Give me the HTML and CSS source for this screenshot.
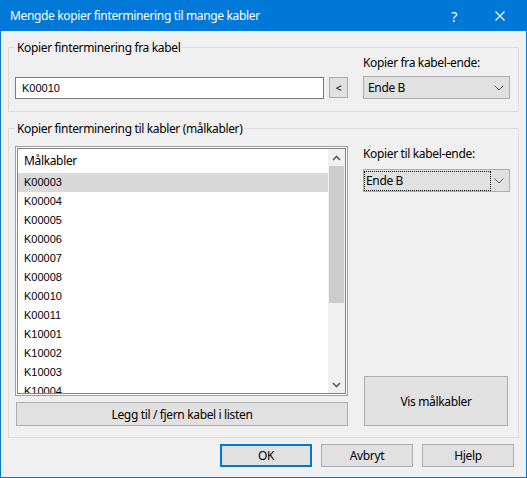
FILE: index.html
```html
<!DOCTYPE html>
<html>
<head>
<meta charset="utf-8">
<title>Mengde kopier finterminering til mange kabler</title>
<link rel="stylesheet" href="styles.css">
</head>
<body>
<div class="window">
  <div class="titlebar">
    <span class="title">Mengde kopier finterminering til mange kabler</span>
    <span class="tb-btn tb-help">?</span>
    <span class="tb-btn tb-close"><svg width="10" height="10" viewBox="0 0 10 10"><path d="M0.5 0.5L9.5 9.5M9.5 0.5L0.5 9.5" stroke="#fff" stroke-width="1.1" fill="none"/></svg></span>
  </div>
  <div class="content">
    <fieldset class="group group-from">
      <legend>Kopier finterminering fra kabel</legend>
      <div class="from-row">
        <div class="from-left">
          <div class="textbox">K00010</div>
          <div class="btn btn-pick">&lt;</div>
        </div>
        <div class="side">
          <div class="side-label">Kopier fra kabel-ende:</div>
          <div class="combo"><span class="combo-text">Ende B</span><svg class="chev" width="10" height="6" viewBox="0 0 10 6"><path d="M0.5 0.5L5 5L9.5 0.5" stroke="#606060" stroke-width="1" fill="none"/></svg></div>
        </div>
      </div>
    </fieldset>

    <fieldset class="group group-to">
      <legend>Kopier finterminering til kabler (målkabler)</legend>
      <div class="to-row">
        <div class="list-col">
          <div class="listbox">
            <div class="lb-inner">
              <div class="lb-rows">
                <div class="lb-head">Målkabler</div>
                <div class="lb-item sel">K00003</div>
                <div class="lb-item">K00004</div>
                <div class="lb-item">K00005</div>
                <div class="lb-item">K00006</div>
                <div class="lb-item">K00007</div>
                <div class="lb-item">K00008</div>
                <div class="lb-item">K00010</div>
                <div class="lb-item">K00011</div>
                <div class="lb-item">K10001</div>
                <div class="lb-item">K10002</div>
                <div class="lb-item">K10003</div>
                <div class="lb-item">K10004</div>
              </div>
              <div class="scrollbar">
                <div class="sb-btn"><svg width="9" height="6" viewBox="0 0 9 6"><path d="M1 5L4.5 1.5L8 5" stroke="#606060" stroke-width="1.6" fill="none"/></svg></div>
                <div class="sb-thumb"></div>
                <div class="sb-track"></div>
                <div class="sb-btn"><svg width="9" height="6" viewBox="0 0 9 6"><path d="M1 1L4.5 4.5L8 1" stroke="#606060" stroke-width="1.6" fill="none"/></svg></div>
              </div>
            </div>
          </div>
          <div class="btn btn-wide">Legg til / fjern kabel i listen</div>
        </div>
        <div class="side side-to">
          <div class="side-label side-label-to">Kopier til kabel-ende:</div>
          <div class="combo combo-focus"><span class="combo-text">Ende B</span><svg class="chev" width="10" height="6" viewBox="0 0 10 6"><path d="M0.5 0.5L5 5L9.5 0.5" stroke="#606060" stroke-width="1" fill="none"/></svg></div>
          <div class="btn btn-show">Vis målkabler</div>
        </div>
      </div>
    </fieldset>

    <div class="footer">
      <div class="btn btn-dialog btn-default">OK</div>
      <div class="btn btn-dialog">Avbryt</div>
      <div class="btn btn-dialog">Hjelp</div>
    </div>
  </div>
</div>
</body>
</html>
```
FILE: styles.css
```css
html, body {
  margin: 0;
  padding: 0;
  background: #f0f0f0;
}

body {
  font-family: "Noto Sans", "Open Sans", sans-serif;
  font-size: 12px;
  letter-spacing: -0.35px;
  color: #000;
}

.window {
  width: 527px;
  height: 478px;
  box-sizing: border-box;
  border: 1px solid #0078d7;
  border-top: 0;
  background: #f0f0f0;
  display: flex;
  flex-direction: column;
}

.titlebar {
  height: 31px;
  background: #0078d7;
  color: #fff;
  display: flex;
  align-items: center;
  padding: 0 3px 0 9px;
  flex: none;
}

.title {
  flex: 1;
  font-size: 12px;
  line-height: 16px;
  padding-top: 1px;
}

.tb-btn {
  width: 46px;
  height: 31px;
  display: flex;
  align-items: center;
  justify-content: center;
}

.tb-help {
  font-size: 14px;
  padding-top: 1px;
}

.content {
  flex: 1;
  padding: 8px 7px 0 7px;
  display: flex;
  flex-direction: column;
}

.group {
  margin: 0;
  border: 1px solid #dcdcdc;
  min-width: 0;
}

.group legend {
  padding: 0 2px;
  line-height: 16px;
  font-size: 12px;
  position: relative;
  top: 1px;
}

.group-from {
  padding: 0 8px 12px 6px;
}

.from-row {
  display: flex;
  gap: 15px;
}

.from-left {
  flex: 1;
  display: flex;
  gap: 5px;
  align-items: flex-start;
  align-self: flex-end;
}

.textbox {
  flex: 1;
  height: 22px;
  box-sizing: border-box;
  border: 1px solid #7a7a7a;
  background: #fff;
  padding-left: 6px;
  font-family: "Liberation Sans", Arial, sans-serif;
  font-size: 11px;
  letter-spacing: 0;
  line-height: 20px;
}

.btn {
  background: #e1e1e1;
  border: 1px solid #adadad;
  box-sizing: border-box;
  display: flex;
  align-items: center;
  justify-content: center;
}

.btn-pick {
  width: 19px;
  height: 21px;
  font-size: 11px;
}

.side {
  width: 147px;
  flex: none;
  display: flex;
  flex-direction: column;
  gap: 6px;
}

.side-label {
  line-height: 15px;
}

.combo {
  height: 23px;
  box-sizing: border-box;
  border: 1px solid #adadad;
  background: #e1e1e1;
  display: flex;
  align-items: center;
  padding-left: 4px;
}

.chev {
  margin-left: auto;
  margin-right: 5px;
}

.combo-focus {
  padding-left: 0;
}

.combo-focus .combo-text {
  width: 127px;
  height: 20px;
  box-sizing: border-box;
  border: 1px dotted #000;
  padding-left: 1px;
  line-height: 18px;
}

.group-to {
  margin-top: 8px;
  padding: 10px 8px 11px 6px;
}

.to-row {
  display: flex;
  gap: 15px;
}

.list-col {
  flex: 1;
  display: flex;
  flex-direction: column;
  gap: 6px;
}

.listbox {
  height: 250px;
  box-sizing: border-box;
  border: 1px solid #a0a0a0;
  padding: 1px;
  background: #fff;
}

.lb-inner {
  height: 100%;
  box-sizing: border-box;
  border: 1px solid #828282;
  display: flex;
  overflow: hidden;
}

.lb-rows {
  flex: 1;
  overflow: hidden;
}

.lb-head {
  height: 24px;
  line-height: 23px;
  padding-left: 6px;
}

.lb-item {
  height: 19px;
  line-height: 19px;
  padding-left: 6px;
  font-family: "Liberation Sans", Arial, sans-serif;
  font-size: 11px;
  letter-spacing: 0;
}

.lb-item.sel {
  background: #d9d9d9;
}

.scrollbar {
  width: 17px;
  flex: none;
  background: #f0f0f0;
  display: flex;
  flex-direction: column;
}

.sb-btn {
  height: 17px;
  flex: none;
  display: flex;
  align-items: center;
  justify-content: center;
}

.sb-thumb {
  height: 137px;
  flex: none;
  margin: 0 1px;
  background: #cdcdcd;
}

.sb-track {
  flex: 1;
}

.btn-wide {
  height: 24px;
  margin-left: 1px;
}

.side-to {
  gap: 0;
}

.side-label-to {
  line-height: 16px;
}

.side-to .combo {
  margin-top: 7px;
}

.btn-show {
  margin-top: auto;
  height: 50px;
  margin-left: 1px;
  margin-right: 2px;
}

.footer {
  margin-top: 6px;
  display: flex;
  justify-content: flex-end;
  gap: 9px;
  padding-right: 5px;
}

.btn-dialog {
  width: 92px;
  height: 23px;
}

.btn-default {
  border: 2px solid #0078d7;
}
```
